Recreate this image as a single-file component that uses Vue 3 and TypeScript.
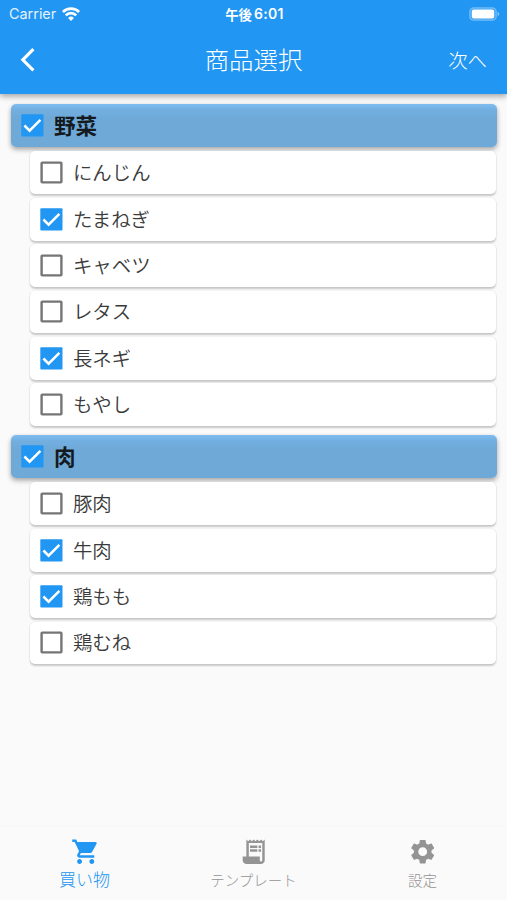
<script setup lang="ts">
import { ref } from 'vue'

interface Item {
  name: string
  checked: boolean
}
interface Group extends Item {
  items: Item[]
}

const groups = ref<Group[]>([
  {
    name: '野菜',
    checked: true,
    items: [
      { name: 'にんじん', checked: false },
      { name: 'たまねぎ', checked: true },
      { name: 'キャベツ', checked: false },
      { name: 'レタス', checked: false },
      { name: '長ネギ', checked: true },
      { name: 'もやし', checked: false },
    ],
  },
  {
    name: '肉',
    checked: true,
    items: [
      { name: '豚肉', checked: false },
      { name: '牛肉', checked: true },
      { name: '鶏もも', checked: true },
      { name: '鶏むね', checked: false },
    ],
  },
])

const tabs = [
  {
    label: '買い物',
    icon: 'M7 18c-1.1 0-1.99.9-1.99 2S5.900 22 7 22s2-.9 2-2-.9-2-2-2zM1 2v2h2l3.600 7.590-1.350 2.450c-.16.28-.25.61-.25.96 0 1.100.9 2 2 2h12v-2H7.420c-.14 0-.25-.11-.25-.25l.03-.12.9-1.630h7.450c.75 0 1.410-.41 1.750-1.030l3.580-6.490A1 1 0 0 0 20 4H5.210l-.94-2H1zm16 16c-1.100 0-1.990.9-1.990 2s.89 2 1.990 2 2-.9 2-2-.9-2-2-2z',
  },
  {
    label: 'テンプレート',
    icon: 'M19.500 3.500L18 2l-1.500 1.500L15 2l-1.500 1.500L12 2l-1.500 1.500L9 2 7.500 3.500 6 2v14H3v3c0 1.660 1.340 3 3 3h12c1.660 0 3-1.340 3-3V2l-1.500 1.500zM19 19c0 .55-.45 1-1 1s-1-.45-1-1v-3H8V5h11v14zM9 7h6v2H9zM16 7h2v2h-2zM9 10h6v2H9zM16 10h2v2h-2z',
  },
  {
    label: '設定',
    icon: 'M19.140 12.940c.04-.3.06-.61.06-.94 0-.32-.02-.64-.07-.94l2.030-1.580c.18-.14.23-.41.12-.61l-1.920-3.320c-.12-.22-.37-.29-.59-.22l-2.390.96c-.5-.38-1.030-.7-1.620-.94l-.36-2.540c-.04-.24-.24-.41-.48-.41h-3.840c-.24 0-.43.17-.47.41l-.36 2.540c-.59.24-1.130.57-1.620.94l-2.390-.96c-.22-.08-.47 0-.59.22L2.740 8.870c-.12.21-.08.47.12.61l2.030 1.580c-.05.3-.09.63-.09.94s.02.64.07.94l-2.030 1.580c-.18.14-.23.41-.12.61l1.920 3.320c.12.22.37.29.59.22l2.390-.96c.5.38 1.030.7 1.620.94l.36 2.540c.05.24.24.41.48.41h3.840c.24 0 .44-.17.47-.41l.36-2.540c.59-.24 1.130-.56 1.620-.94l2.390.96c.22.08.47 0 .59-.22l1.920-3.320c.12-.22.07-.47-.12-.61l-2.010-1.580zM12 15.600A3.600 3.600 0 1 1 12 8.400a3.600 3.600 0 0 1 0 7.200z',
  },
]
const activeTab = ref(0)
</script>

<template>
  <div class="screen">
    <header class="app-bar">
      <div class="status">
        <div class="carrier">
          <span>Carrier</span>
          <svg class="wifi" viewBox="0 0 18 14">
            <g fill="none" stroke="#fff" stroke-width="2.600">
              <path d="M.9 5a11.400 11.400 0 0 1 16.200 0" />
              <path d="M3.800 8.300a7.300 7.300 0 0 1 10.400 0" />
            </g>
            <path d="M9 13.900L6.100 10.900a4.100 4.100 0 0 1 5.800 0z" fill="#fff" />
          </svg>
        </div>
        <div class="clock"><span>午後</span><span class="digits">6:01</span></div>
        <div class="power">
          <svg class="battery" viewBox="0 0 32 14">
            <rect x="1.800" y=".8" width="26.400" height="12.400" rx="3.800" fill="#fff" fill-opacity=".12" stroke="#fff" stroke-opacity=".35" stroke-width="1.200" />
            <rect x="3.800" y="2.600" width="22.400" height="8.800" rx="2" fill="#fff" />
            <path d="M29.600 4.800c2.200.8 2.200 3.600 0 4.400z" fill="#fff" fill-opacity=".45" />
          </svg>
        </div>
      </div>
      <div class="toolbar">
        <button class="back" aria-label="戻る">
          <svg viewBox="0 0 16 26"><path d="M13.400 2.200L2.800 12.800 13.400 23.400" fill="none" stroke="#fff" stroke-width="3.100" /></svg>
        </button>
        <h1>商品選択</h1>
        <button class="next">次へ</button>
      </div>
    </header>

    <main>
      <section v-for="group in groups" :key="group.name">
        <div class="card group" @click="group.checked = !group.checked">
          <svg class="box" viewBox="0 0 23 23">
            <template v-if="group.checked">
              <rect x=".3" y=".3" width="22.200" height="22.200" rx="1" fill="#2196f3" />
              <path d="M3.400 11.500l5.200 5.200L19.400 5.800" />
            </template>
            <rect v-else x="1.600" y="1.600" width="19.800" height="19.800" rx=".6" class="outline" />
          </svg>
          <span class="name">{{ group.name }}</span>
        </div>
        <div v-for="item in group.items" :key="item.name" class="card item" @click="item.checked = !item.checked">
          <svg class="box" viewBox="0 0 23 23">
            <template v-if="item.checked">
              <rect x=".3" y=".3" width="22.200" height="22.200" rx="1" fill="#2196f3" />
              <path d="M3.400 11.500l5.200 5.200L19.400 5.800" />
            </template>
            <rect v-else x="1.600" y="1.600" width="19.800" height="19.800" rx=".6" class="outline" />
          </svg>
          <span class="name">{{ item.name }}</span>
        </div>
      </section>
    </main>

    <nav>
      <button v-for="(tab, i) in tabs" :key="tab.label" class="tab" :class="{ active: i === activeTab }" @click="activeTab = i">
        <svg viewBox="0 0 24 24"><path :d="tab.icon" fill="currentColor" fill-rule="evenodd" /></svg>
        <span>{{ tab.label }}</span>
      </button>
    </nav>
  </div>
</template>

<style>
body {
  margin: 0;
  background: #fafafa;
}
</style>

<style scoped>
.screen {
  display: flex;
  flex-direction: column;
  height: 900px;
  overflow: hidden;
  background: #fafafa;
  color: #3a3a3a;
  font-family: "Noto Sans CJK JP", sans-serif;
}
button {
  padding: 0;
  border: 0;
  background: none;
  color: inherit;
  font: inherit;
}
svg {
  display: block;
}
.app-bar {
  height: 94px;
  flex: none;
  background: #2196f3;
  color: #fff;
  box-shadow: 0 2px 5px rgba(0, 0, 0, 0.22), 0 4px 6px rgba(0, 0, 0, 0.12);
}
.status {
  display: grid;
  grid-template-columns: 1fr auto 1fr;
  align-items: center;
  height: 27px;
  padding: 0 7px 0 9px;
}
.carrier {
  display: flex;
  align-items: center;
  gap: 6px;
  font: 14.4px/27px Inter, sans-serif;
  color: #e4f2fe;
}
.wifi {
  width: 18px;
  height: 14px;
}
.clock {
  display: flex;
  align-items: center;
  gap: 2px;
  font-size: 13.400px;
  font-weight: 700;
  line-height: 26px;
}
.digits {
  font-family: Inter, sans-serif;
  font-size: 14px;
  font-weight: 600;
  letter-spacing: 0.3px;
}
.power {
  display: flex;
  justify-content: flex-end;
}
.battery {
  width: 32px;
  height: 14px;
}
.toolbar {
  display: grid;
  grid-template-columns: 1fr auto 1fr;
  align-items: center;
  height: 66px;
  padding: 0 20px;
}
.back svg {
  width: 16px;
  height: 26px;
}
h1 {
  margin: 0;
  padding-bottom: 2px;
  font-size: 24.4px;
  font-weight: 300;
  line-height: 36px;
}
.next {
  justify-self: end;
  padding-bottom: 1px;
  font-size: 19.4px;
  font-weight: 300;
  line-height: 30px;
}
main {
  flex: 1;
  padding: 10px 10px 0 11px;
}
section {
  display: flex;
  flex-direction: column;
  gap: 3.600px;
  margin-bottom: 8.800px;
}
.card {
  display: flex;
  align-items: center;
  gap: 10.300px;
  height: 42.8px;
  box-sizing: border-box;
  padding-left: 9.700px;
  border-radius: 5px;
}
.name {
  padding-bottom: 2px;
}
.group {
  margin-bottom: 1px;
  background: linear-gradient(#7fbcf0, #72afe0 6px, #6ea9d8 14px);
  color: #151a1e;
  font-size: 21.6px;
  font-weight: 700;
  box-shadow: 0 2px 4px rgba(0, 0, 0, 0.24), 0 3px 6px rgba(0, 0, 0, 0.14);
}
.item {
  margin: 0 1px 0 19px;
  background: #fff;
  font-size: 19.4px;
  font-weight: 350;
  box-shadow: 0 1.500px 2px rgba(0, 0, 0, 0.2), 0 0 2px rgba(0, 0, 0, 0.06);
}
.box {
  width: 23px;
  height: 23px;
  flex: none;
}
.box path {
  fill: none;
  stroke: #fff;
  stroke-width: 2.500;
}
.outline {
  fill: none;
  stroke: #757575;
  stroke-width: 2.400;
}
nav {
  display: grid;
  grid-template-columns: repeat(3, 1fr);
  height: 74px;
  flex: none;
  border-top: 1px solid #f6f6f6;
  box-sizing: border-box;
}
.tab {
  display: flex;
  flex-direction: column;
  align-items: center;
  padding-top: 9.500px;
  color: #949494;
  font-size: 14.500px;
  font-weight: 300;
  line-height: 28px;
}
.tab svg {
  width: 29.400px;
  height: 29.400px;
}
.tab.active {
  color: #2196f3;
  font-size: 17px;
  line-height: 25px;
}
.tab.active svg {
  margin-left: 2px;
}
</style>
